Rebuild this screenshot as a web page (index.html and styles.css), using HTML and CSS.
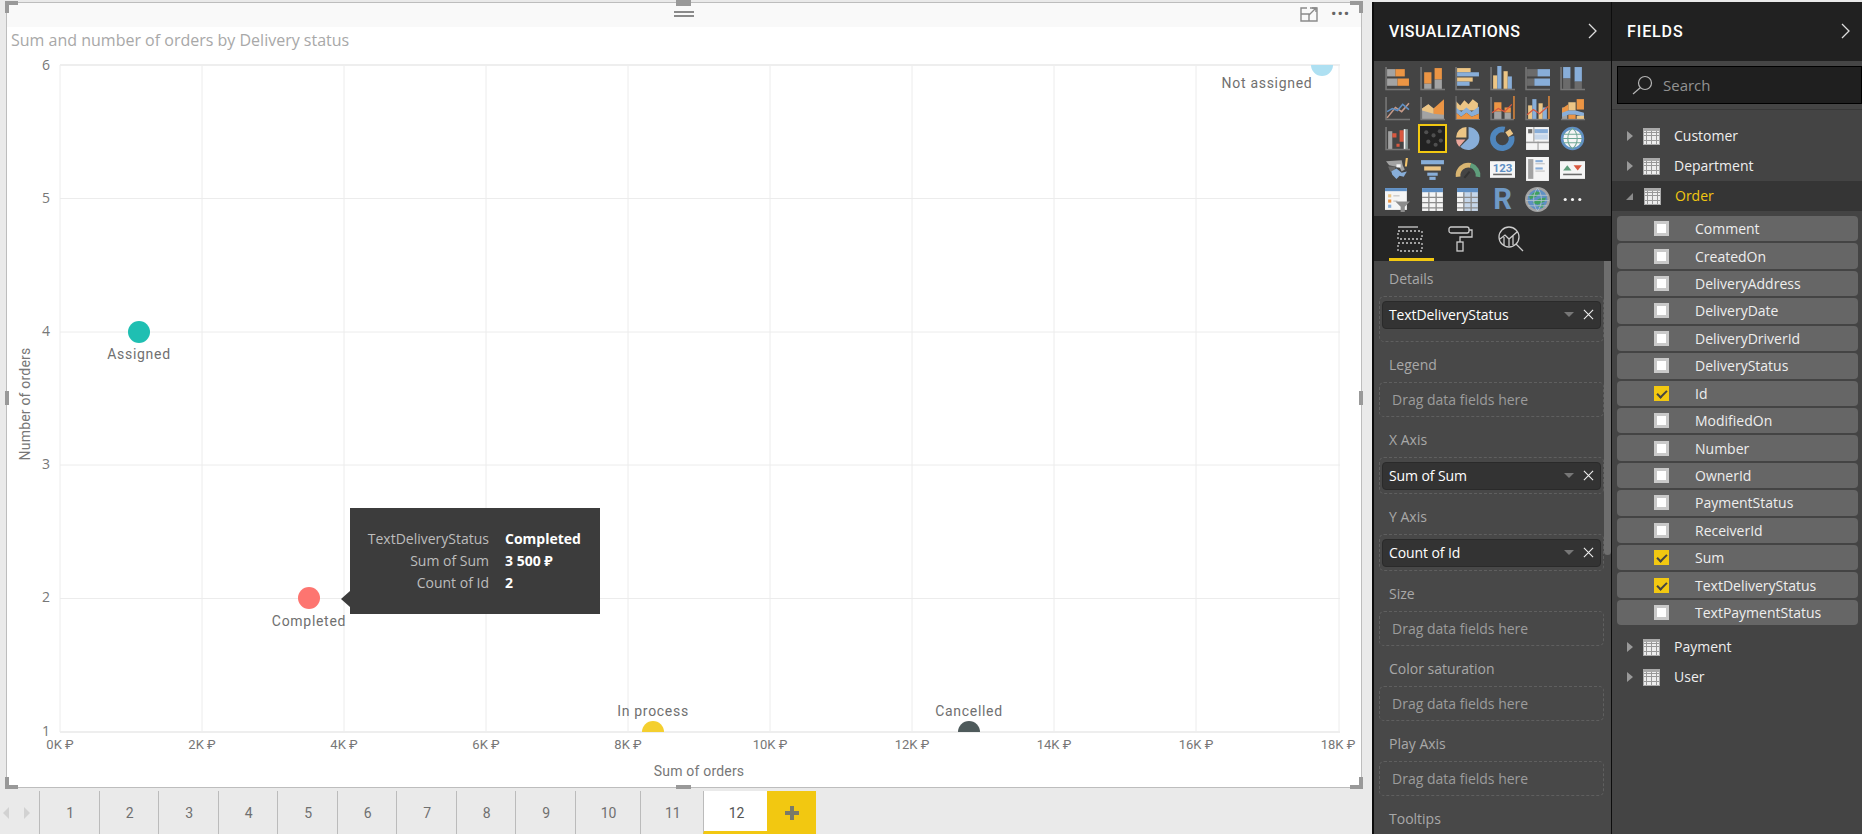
FILE: index.html
```html
<!DOCTYPE html>
<html lang="en">

<head>
    <meta charset="UTF-8">
    <title>Orders report</title>
    <link rel="stylesheet" href="styles.css">
</head>

<body>
    <!-- Report canvas and page tabs -->
    <div class="report">
        <div class="canvas">
            <div class="visual">
                <span class="grip corner tl"></span>
                <span class="grip corner tr"></span>
                <span class="grip corner bl"></span>
                <span class="grip corner br"></span>
                <span class="grip side-top"></span>
                <span class="grip side-left"></span>
                <span class="grip side-right"></span>
                <span class="grip side-bottom"></span>
                <span class="drag-lines"></span>

                <div class="visual-head">
                    <svg class="focus-icon" width="18" height="15" viewBox="0 0 18 15">
                        <path d="M10 1H17V14H1V7H9V14M1 7V1H7" class="icon-line" />
                        <path d="M9 8L16 1M12 1H16V5" class="icon-line" />
                    </svg>
                    <span class="more">&middot;&middot;&middot;</span>
                </div>
                <div class="visual-title">Sum and number of orders by Delivery status</div>

                <!-- viewBox uses page coordinates so the numbers can be read against the plot -->
                <svg class="chart" viewBox="7 55 1353 732">
                    <defs>
                        <clipPath id="plot-clip">
                            <rect x="60" y="65" width="1280" height="667" />
                        </clipPath>
                    </defs>
                    <g class="grid">
                        <path d="M60 65V732M202 65V732M344 65V732M486 65V732M628 65V732M770 65V732M912 65V732M1054 65V732M1196 65V732M1339 65V732" />
                        <path d="M60 198.500H1340M60 332H1340M60 465H1340M60 598.500H1340" />
                        <path class="grid-edge" d="M60 65H1340M60 732H1340" />
                    </g>
                    <g class="y-ticks">
                        <text x="50" y="70">6</text>
                        <text x="50" y="203">5</text>
                        <text x="50" y="336">4</text>
                        <text x="50" y="469">3</text>
                        <text x="50" y="602">2</text>
                        <text x="50" y="736">1</text>
                    </g>
                    <g class="x-ticks">
                        <text x="60" y="749">0K ₽</text>
                        <text x="202" y="749">2K ₽</text>
                        <text x="344" y="749">4K ₽</text>
                        <text x="486" y="749">6K ₽</text>
                        <text x="628" y="749">8K ₽</text>
                        <text x="770" y="749">10K ₽</text>
                        <text x="912" y="749">12K ₽</text>
                        <text x="1054" y="749">14K ₽</text>
                        <text x="1196" y="749">16K ₽</text>
                        <text x="1338" y="749">18K ₽</text>
                    </g>
                    <text class="axis-title" x="699" y="776">Sum of orders</text>
                    <text class="axis-title" transform="translate(30 404) rotate(-90)">Number of orders</text>

                    <g clip-path="url(#plot-clip)">
                        <circle class="pt-blue" cx="1322" cy="65" r="11" />
                        <circle class="pt-teal" cx="139" cy="332" r="11" />
                        <circle class="pt-red" cx="309" cy="598" r="11" />
                        <circle class="pt-yellow" cx="653" cy="732" r="11" />
                        <circle class="pt-slate" cx="969" cy="732" r="11" />
                    </g>
                    <g class="pt-labels">
                        <text x="1267" y="88">Not assigned</text>
                        <text x="139" y="359">Assigned</text>
                        <text x="309" y="626">Completed</text>
                        <text x="653" y="716">In process</text>
                        <text x="969" y="716">Cancelled</text>
                    </g>
                </svg>

                <div class="tooltip">
                    <span class="tip-key">TextDeliveryStatus</span><b>Completed</b>
                    <span class="tip-key">Sum of Sum</span><b>3 500 ₽</b>
                    <span class="tip-key">Count of Id</span><b>2</b>
                </div>
            </div>
        </div>

        <div class="tabs">
            <div class="tab-nav">
                <span class="nav-arrow left"></span>
                <span class="nav-arrow right"></span>
            </div>
            <div class="tab">1</div>
            <div class="tab">2</div>
            <div class="tab">3</div>
            <div class="tab">4</div>
            <div class="tab">5</div>
            <div class="tab">6</div>
            <div class="tab">7</div>
            <div class="tab">8</div>
            <div class="tab">9</div>
            <div class="tab wide">10</div>
            <div class="tab mid">11</div>
            <div class="tab active">12</div>
            <div class="tab-add">
                <svg width="14" height="14" viewBox="0 0 14 14"><path class="plus" d="M5 0H9V5H14V9H9V14H5V9H0V5H5Z" /></svg>
            </div>
        </div>
    </div>

    <!-- Visualizations pane -->
    <div class="pane viz">
        <div class="pane-head">
            <span>VISUALIZATIONS</span>
            <svg class="chevron" width="10" height="16" viewBox="0 0 10 16"><path d="M1 1L8 8L1 15" /></svg>
        </div>

        <div class="gallery">
            <!-- row 1 -->
            <svg viewBox="0 0 24 24"><rect class="gy" x="2" y="3" width="8" height="7" /><rect class="or" x="10" y="3" width="9" height="7" /><rect class="gy" x="2" y="12" width="10" height="7" /><rect class="or" x="12" y="12" width="11" height="7" /><path class="ax" d="M1 1V22.500H24" /></svg>
            <svg viewBox="0 0 24 24"><rect class="or" x="4" y="6" width="7" height="11" /><rect class="gy" x="4" y="17" width="7" height="5" /><rect class="or" x="14" y="2" width="7" height="11" /><rect class="gy" x="14" y="13" width="7" height="9" /><path class="ax" d="M1 1V22.500H24" /></svg>
            <svg viewBox="0 0 24 24"><rect class="tn" x="2" y="2" width="13" height="4" /><rect class="bl" x="2" y="6" width="21" height="4" /><rect class="tn" x="2" y="11" width="15" height="4" /><rect class="bl" x="2" y="15" width="12" height="4" /><path class="ax" d="M1 1V22.500H24" /></svg>
            <svg viewBox="0 0 24 24"><rect class="tn" x="3" y="9" width="4" height="13" /><rect class="bl" x="7" y="0" width="4" height="22" /><rect class="tn" x="13" y="5" width="4" height="17" /><rect class="bl" x="17" y="10" width="4" height="12" /><path class="ax" d="M1 1V22.500H24" /></svg>
            <svg viewBox="0 0 24 24"><rect class="dk" x="2" y="3" width="10" height="7" /><rect class="bl" x="12" y="3" width="12" height="7" /><rect class="dk" x="2" y="12" width="7" height="7" /><rect class="bl" x="9" y="12" width="15" height="7" /><path class="ax" d="M1 1V22.500H24" /></svg>
            <svg viewBox="0 0 24 24"><rect class="bl" x="3" y="1" width="7" height="11" /><rect class="dk" x="3" y="12" width="7" height="10" /><rect class="bl" x="14" y="1" width="7" height="14" /><rect class="dk" x="14" y="15" width="7" height="7" /><path class="ax" d="M1 1V22.500H24" /></svg>
            <!-- row 2 -->
            <svg viewBox="0 0 24 24"><path class="ax" d="M1 1V22.500H24" /><path class="ln-tan" d="M2 21L10 11L16 15L23 7" /><path class="ln-blue" d="M2 15L7 12L12 14L17 8L23 13" /></svg>
            <svg viewBox="0 0 24 24"><path class="gy" d="M2 12L8 8L13 12L23 6V22H2Z" /><path class="tn" d="M2 12L8 8L13 12L13 17L2 14Z" /><path class="or" d="M13 12L23 3V18L13 17Z" /><path class="ax" d="M1 1V22.500H24" /></svg>
            <svg viewBox="0 0 24 24"><path class="tn" d="M1 5L5 9L9 4L13 8L17 3L22 7V14H1Z" /><path class="bl" d="M1 11L6 15L11 11L16 15L23 10V17L16 20L11 16L6 20L1 16Z" /><path class="or" d="M1 16L6 20L11 16L16 20L23 17V22H1Z" /><path class="ax-thin" d="M1 0V22.500H24" /></svg>
            <svg viewBox="0 0 24 24"><path class="ax" d="M1 1V22.500H23" /><path class="ax-or" d="M23 0V22" /><rect class="or" x="4" y="6" width="7" height="9" /><rect class="gy" x="4" y="15" width="7" height="7" /><rect class="or" x="14" y="11" width="6" height="5" /><rect class="gy" x="14" y="16" width="6" height="6" /><path class="ln-red" d="M2 16L8 12L14 15L21 8" /></svg>
            <svg viewBox="0 0 24 24"><path class="ax" d="M1 1V22.500H23" /><path class="ax-or" d="M23 0V22" /><rect class="tn" x="3" y="9" width="4" height="13" /><rect class="bl" x="7" y="3" width="4" height="19" /><rect class="tn" x="13" y="7" width="4" height="15" /><rect class="bl" x="17" y="11" width="4" height="11" /><path class="ln-red" d="M2 18L8 13L14 17L22 10" /></svg>
            <svg viewBox="0 0 24 24"><path class="ax" d="M1 22.500H24" /><rect class="gy" x="2" y="11" width="5" height="11" /><rect class="tn" x="8" y="6" width="7" height="8" /><rect class="or" x="16" y="3" width="7" height="10" /><path class="or" d="M2 12L8 8V14L2 17Z" /><path class="bl" d="M2 16L8 14H15L23 16V20L15 18H8L2 20Z" /><rect class="or" x="8" y="18" width="7" height="4" /><rect class="tn" x="16" y="19" width="7" height="3" /></svg>
            <!-- row 3 -->
            <svg viewBox="0 0 24 24"><path class="ax" d="M1 1V22.500H24" /><rect class="gy" x="3" y="5" width="4" height="17" /><path class="red" d="M7 7H11V17H14V4H18V15H14V20H11V11H7Z" /><rect class="dk-bar" x="19" y="3" width="3" height="19" /><rect class="wh" x="18" y="3" width="1.500" height="19" /></svg>
            <svg class="sel" viewBox="0 0 24 24"><circle class="dot" cx="6" cy="6" r="2" /><circle class="dot" cx="13" cy="9" r="2" /><circle class="dot" cx="19" cy="5" r="2" /><circle class="dot" cx="8" cy="15" r="2" /><circle class="dot" cx="15" cy="18" r="2" /><circle class="dot" cx="20" cy="14" r="2" /></svg>
            <svg viewBox="0 0 24 24"><path class="bl" d="M13 1A11 11 0 1 1 5 20L13 12Z" /><path class="tn" d="M11 1V11H1A10 10 0 0 1 11 1Z" /><path class="pink" d="M1 13H10L4 20A10 10 0 0 1 1 13Z" /></svg>
            <svg viewBox="0 0 24 24"><path class="ring-blue" d="M14 3.500A9 9 0 1 0 20.500 10" /><path class="ring-tan" d="M17 4.500L20 9" /></svg>
            <svg viewBox="0 0 24 24"><rect class="wh" x="1" y="1" width="22" height="22" /><rect class="bl" x="9" y="3" width="13" height="4" /><rect class="bl-l" x="9" y="8" width="13" height="5" /><rect class="dk" x="3" y="3" width="4" height="4" /><rect class="line-fill" x="1" y="15" width="22" height="1.500" /><rect class="line-fill" x="8" y="1" width="1" height="14" /><rect class="line-fill" x="12" y="15" width="1" height="8" /></svg>
            <svg viewBox="0 0 24 24"><circle class="wh" cx="12" cy="12" r="10" /><circle class="rim-blue" cx="12" cy="12" r="10" /><path class="globe-line" d="M3 8H21M2.500 12H21.500M3 16H21M12 2C6 7 6 17 12 22M12 2C18 7 18 17 12 22" /></svg>
            <!-- row 4 -->
            <svg viewBox="0 0 24 24"><path class="gy" d="M1 4L16 3L17 8L19 12L16 14L14 10L4 8Z" /><path class="dk" d="M3 9L10 9L10 15L5 14Z" /><path class="bl" d="M6 14L11 11L16 15L21 14L18 19L14 18L11 21L7 17Z" /><path class="wh" d="M11 7L15 7L15 10L11 10Z" /><path class="or-y" d="M20 1H22L21 9H19Z" /></svg>
            <svg viewBox="0 0 24 24"><rect class="bl" x="1" y="3" width="22" height="4" /><rect class="tn" x="4" y="9" width="16" height="4" /><rect class="bl" x="7" y="15" width="10" height="3" /><rect class="bl" x="9" y="19" width="6" height="3" /></svg>
            <svg viewBox="0 0 24 24"><path class="arc-tan" d="M3 19A10 10 0 0 1 15 8" /><path class="arc-green" d="M15 8A10 10 0 0 1 22 19" /><path class="needle" d="M9 20L14 14" /></svg>
            <svg viewBox="0 0 24 24"><rect class="wh" x="0" y="4" width="24" height="16" /><text class="card-num" x="12" y="14">123</text><rect class="dk" x="3" y="16" width="18" height="1.500" /></svg>
            <svg viewBox="0 0 24 24"><rect class="wh" x="1" y="0" width="22" height="23" /><rect class="gy" x="3" y="2" width="5" height="19" /><rect class="bl" x="10" y="3" width="7" height="2" /><rect class="gy-l" x="10" y="6" width="9" height="1" /><rect class="bl" x="10" y="10" width="7" height="2" /><rect class="gy-l" x="10" y="13" width="9" height="1" /></svg>
            <svg viewBox="0 0 24 24"><rect class="wh" x="0" y="4" width="24" height="17" /><path class="green" d="M3 13L7 8L11 13Z" /><path class="red" d="M13 8H21L17 13Z" /><rect class="dk" x="3" y="16" width="18" height="1.500" /></svg>
            <!-- row 5 -->
            <svg viewBox="0 0 24 24"><rect class="wh" x="0" y="1" width="21" height="21" /><rect class="bl-d" x="0" y="1" width="21" height="3" /><rect class="tn" x="3" y="7" width="3" height="3" /><rect class="or" x="3" y="12" width="3" height="3" /><rect class="bl" x="3" y="17" width="3" height="3" /><rect class="gy-l" x="8" y="8" width="6" height="1" /><rect class="gy-l" x="8" y="13" width="4" height="1" /><path class="funnel" d="M10 14H24L19 19V24H15V19Z" /></svg>
            <svg viewBox="0 0 24 24"><rect class="wh" x="2" y="1" width="20" height="22" /><rect class="bl-d" x="2" y="1" width="20" height="4" /><path class="cell-line" d="M2 10H22M2 15H22M2 20H22M8.500 5V23M15.500 5V23" /></svg>
            <svg viewBox="0 0 24 24"><rect class="bl-l" x="2" y="1" width="20" height="22" /><rect class="bl-d" x="2" y="1" width="20" height="4" /><rect class="wh" x="2" y="5" width="6" height="18" /><path class="cell-line" d="M2 10H22M2 15H22M2 20H22M8.500 5V23M15.500 5V23" /></svg>
            <svg viewBox="0 0 24 24"><text class="r-mark" x="12" y="21">R</text></svg>
            <svg viewBox="0 0 24 24"><circle class="gy" cx="12" cy="12" r="12" /><circle class="bl-d" cx="12" cy="12" r="9.500" /><path class="earth" d="M4 9L10 4L15 5L11 9L5 12ZM7 15L14 11L20 10L19 14L12 17ZM12 19L18 16L17 20Z" /><path class="grid-globe" d="M2 8H22M1 13H23M3 18H21M12 1C7 7 7 17 12 23M12 1C17 7 17 17 12 23" /></svg>
            <svg viewBox="0 0 24 24"><circle class="wh" cx="5" cy="12" r="1.500" /><circle class="wh" cx="12" cy="12" r="1.500" /><circle class="wh" cx="19" cy="12" r="1.500" /></svg>
        </div>

        <div class="pane-tabs">
            <div class="pane-tab on">
                <svg width="26" height="26" viewBox="0 0 26 26">
                    <path class="icon-pale" d="M1 1H21" />
                    <rect class="icon-dash" x="1" y="5" width="24" height="8" />
                    <rect class="icon-dash" x="1" y="17" width="24" height="8" />
                </svg>
            </div>
            <div class="pane-tab">
                <svg width="26" height="26" viewBox="0 0 26 26">
                    <rect class="icon-pale" x="1" y="1" width="20" height="6" rx="2" />
                    <path class="icon-pale" d="M21 4H24V11H12V16" />
                    <rect class="icon-pale" x="9" y="16" width="6" height="9" />
                </svg>
            </div>
            <div class="pane-tab">
                <svg width="26" height="26" viewBox="0 0 26 26">
                    <circle class="icon-pale" cx="11" cy="11" r="10" />
                    <path class="icon-pale" d="M18 18L25 25" />
                    <path class="icon-pale" d="M2 13L7 9L11 13L19 6M6 11V19M11 13V20M15 10V19" />
                </svg>
            </div>
        </div>

        <div class="wells">
            <div class="scrollbar"></div>

            <div class="well-label">Details</div>
            <div class="well filled details">
                <div class="pill"><span>TextDeliveryStatus</span><i class="caret"></i><svg class="x-mark" viewBox="0 0 12 12"><path d="M1 1L11 11M11 1L1 11" /></svg></div>
            </div>

            <div class="well-label">Legend</div>
            <div class="well">Drag data fields here</div>

            <div class="well-label">X Axis</div>
            <div class="well filled">
                <div class="pill"><span>Sum of Sum</span><i class="caret"></i><svg class="x-mark" viewBox="0 0 12 12"><path d="M1 1L11 11M11 1L1 11" /></svg></div>
            </div>

            <div class="well-label">Y Axis</div>
            <div class="well filled">
                <div class="pill"><span>Count of Id</span><i class="caret"></i><svg class="x-mark" viewBox="0 0 12 12"><path d="M1 1L11 11M11 1L1 11" /></svg></div>
            </div>

            <div class="well-label">Size</div>
            <div class="well">Drag data fields here</div>

            <div class="well-label">Color saturation</div>
            <div class="well">Drag data fields here</div>

            <div class="well-label">Play Axis</div>
            <div class="well">Drag data fields here</div>

            <div class="well-label">Tooltips</div>
        </div>
    </div>

    <!-- Fields pane -->
    <div class="pane fields">
        <div class="pane-head">
            <span>FIELDS</span>
            <svg class="chevron" width="10" height="16" viewBox="0 0 10 16"><path d="M1 1L8 8L1 15" /></svg>
        </div>

        <div class="search-wrap">
            <div class="search">
                <svg width="21" height="20" viewBox="0 0 21 20">
                    <circle class="search-line" cx="13" cy="8" r="6.500" />
                    <path class="search-line" d="M8.500 12.500L1 19" />
                </svg>
                <span>Search</span>
            </div>
        </div>

        <div class="field-list">
            <div class="group"><i class="tri"></i><span class="tbl"></span>Customer</div>
            <div class="group"><i class="tri"></i><span class="tbl"></span>Department</div>
            <div class="group open"><i class="tri"></i><span class="tbl"></span>Order</div>

            <div class="rows">
                <div class="row"><i class="check"></i>Comment</div>
                <div class="row"><i class="check"></i>CreatedOn</div>
                <div class="row"><i class="check"></i>DeliveryAddress</div>
                <div class="row"><i class="check"></i>DeliveryDate</div>
                <div class="row"><i class="check"></i>DeliveryDriverId</div>
                <div class="row"><i class="check"></i>DeliveryStatus</div>
                <div class="row"><i class="check on"></i>Id</div>
                <div class="row"><i class="check"></i>ModifiedOn</div>
                <div class="row"><i class="check"></i>Number</div>
                <div class="row"><i class="check"></i>OwnerId</div>
                <div class="row"><i class="check"></i>PaymentStatus</div>
                <div class="row"><i class="check"></i>ReceiverId</div>
                <div class="row"><i class="check on"></i>Sum</div>
                <div class="row"><i class="check on"></i>TextDeliveryStatus</div>
                <div class="row"><i class="check"></i>TextPaymentStatus</div>
            </div>

            <div class="group"><i class="tri"></i><span class="tbl"></span>Payment</div>
            <div class="group"><i class="tri"></i><span class="tbl"></span>User</div>
        </div>
    </div>
</body>

</html>
```

FILE: styles.css
```css
/* Page */
html {
    height: 834px;
    overflow: hidden;
}

body {
    margin: 0;
    height: 834px;
    overflow: hidden;
    display: flex;
    background: #eaeaea;
    font-family: 'Open Sans', 'Noto Sans', sans-serif;
    font-size: 14px;
    color: #eee;
}

/* Report canvas */
.report {
    width: 1372px;
    flex: none;
    display: flex;
    flex-direction: column;
}

.canvas {
    height: 791px;
    padding: 2px 10px 0 6px;
    box-sizing: border-box;
}

.visual {
    position: relative;
    height: 786px;
    box-sizing: border-box;
    border: 1px solid #bdbdbd;
    background: #fff;
    display: flex;
    flex-direction: column;
}

.visual-head {
    height: 24px;
    flex: none;
    background: #f9f9f9;
    display: flex;
    justify-content: flex-end;
    align-items: flex-start;
    padding: 4px 8px 0 0;
    box-sizing: border-box;
}

.focus-icon {
    margin-right: 13px;
}

.icon-line {
    fill: none;
    stroke: #8a8a8a;
    stroke-width: 1.4;
}

.more {
    width: 22px;
    font: bold 19px/12px 'Open Sans', sans-serif;
    letter-spacing: 1px;
    color: #666;
}

.visual-title {
    height: 28px;
    flex: none;
    padding-left: 4px;
    font-size: 16px;
    line-height: 27px;
    color: #a8a8a8;
}

.chart {
    width: 1353px;
    height: 732px;
    display: block;
    flex: none;
}

.grid path {
    fill: none;
    stroke: #ececec;
    stroke-width: 1;
}

.grid .grid-edge {
    stroke: #eee;
    stroke-width: 2;
}

.y-ticks text {
    text-anchor: end;
    font-size: 14px;
    fill: #777;
}

.x-ticks text {
    text-anchor: middle;
    font: 13px 'Roboto', sans-serif;
    fill: #777;
}

.axis-title {
    text-anchor: middle;
    font: 14px 'Roboto', sans-serif;
    letter-spacing: 0.2px;
    fill: #777;
}

.pt-labels text {
    text-anchor: middle;
    font: 14px 'Roboto', sans-serif;
    letter-spacing: 0.7px;
    fill: #707070;
}

.pt-blue { fill: #aee0f2; }
.pt-teal { fill: #1fbfb2; }
.pt-red { fill: #fd7570; }
.pt-yellow { fill: #f4cf2f; }
.pt-slate { fill: #4e5a5b; }

/* Selection handles round the visual */
.grip {
    position: absolute;
    background: #999;
}

.corner {
    width: 13px;
    height: 12px;
    background: none;
    border: 0 solid #999;
    box-sizing: border-box;
}

.tl { left: -2px; top: -2px; border-width: 4px 0 0 4px; }
.tr { right: -2px; top: -2px; border-width: 4px 4px 0 0; }
.bl { left: -2px; bottom: -2px; border-width: 0 0 4px 4px; }
.br { right: -2px; bottom: -2px; border-width: 0 4px 4px 0; }

.side-top { left: 669px; top: -3px; width: 15px; height: 6px; }
.side-left { left: -2px; top: 388px; width: 4px; height: 14px; }
.side-right { right: -2px; top: 388px; width: 4px; height: 14px; }
.side-bottom { left: 669px; bottom: -2px; width: 15px; height: 4px; }

.drag-lines {
    position: absolute;
    left: 667px;
    top: 8px;
    width: 20px;
    height: 6px;
    border-top: 2px solid #8a8a8a;
    border-bottom: 2px solid #8a8a8a;
    box-sizing: border-box;
}

/* Tooltip over the chart */
.tooltip {
    position: absolute;
    left: 343px;
    top: 505px;
    width: 250px;
    height: 106px;
    box-sizing: border-box;
    padding: 20px 0 0 16px;
    background: #3c3c3c;
    display: grid;
    grid-template-columns: 123px auto;
    grid-auto-rows: 22px;
    column-gap: 16px;
    align-content: start;
    line-height: 22px;
    font-size: 14px;
    color: #fff;
}

.tooltip::before {
    content: "";
    position: absolute;
    left: -9px;
    top: 83px;
    border: 8px solid transparent;
    border-left: 0;
    border-right: 9px solid #3c3c3c;
}

.tip-key {
    text-align: right;
    color: #bdbdbd;
}

/* Page tabs */
.tabs {
    height: 43px;
    display: flex;
    background: #eaeaea;
}

.tab-nav {
    width: 39px;
    flex: none;
    display: flex;
    align-items: center;
    justify-content: space-between;
    padding: 0 9px 0 3px;
    box-sizing: border-box;
}

.nav-arrow {
    width: 0;
    height: 0;
    border: 6px solid transparent;
}

.nav-arrow.left {
    border-left: 0;
    border-right: 6px solid #d2d2d2;
}

.nav-arrow.right {
    border-right: 0;
    border-left: 6px solid #d2d2d2;
}

.tab {
    width: 59.500px;
    flex: none;
    box-sizing: border-box;
    padding-left: 2px;
    border-left: 1px solid #bbb;
    text-align: center;
    font: 14px/45px 'Roboto', sans-serif;
    color: #707070;
}

.tab.wide {
    width: 65px;
}

.tab.mid {
    width: 63.500px;
}

.tab.active {
    width: 64px;
    height: 43px;
    background: #fff;
    color: #555;
    border-bottom: 3px solid #f2c811;
}

.tab-add {
    width: 49px;
    flex: none;
    background: #f2c811;
    display: flex;
    align-items: center;
    justify-content: center;
}

.plus {
    fill: #7a7a68;
}

/* Side panes */
.pane {
    flex: none;
    box-sizing: border-box;
    border-left: 2px solid #0d0d0d;
    margin-top: 2px;
    display: flex;
    flex-direction: column;
    height: 832px;
    overflow: hidden;
}

.viz {
    width: 239px;
    background: #484848;
}

.fields {
    width: 251px;
    border-left-width: 1px;
    background: #444;
}

.pane-head {
    height: 59px;
    flex: none;
    background: #212121;
    display: flex;
    justify-content: space-between;
    align-items: center;
    padding: 3px 13px 4px 15px;
    box-sizing: border-box;
    font: 500 16px 'Roboto', sans-serif;
    letter-spacing: 0.5px;
    color: #fff;
}

.fields .pane-head {
    padding-left: 15px;
    padding-right: 11px;
    letter-spacing: 0.9px;
}

.chevron path {
    fill: none;
    stroke: #ddd;
    stroke-width: 1.3;
}

/* Visual type gallery */
.gallery {
    height: 155px;
    flex: none;
    box-sizing: border-box;
    padding: 2px 0 0 6px;
    background: #444;
    display: grid;
    grid-template-columns: repeat(6, 35px);
    grid-auto-rows: 30.400px;
    justify-items: center;
    align-items: center;
}

.gallery svg {
    width: 25px;
    height: 25px;
    overflow: visible;
    display: block;
}

.gallery .sel {
    background: #222;
    outline: 2px solid #f2c811;
}

.or { fill: #ec9544; }
.bl { fill: #88aed9; }
.bl-l { fill: #c5d6ea; }
.bl-d { fill: #5f8fc4; }
.tn { fill: #ecc585; }
.gy { fill: #a3a3a3; }
.gy-l { fill: #bdbdbd; }
.dk { fill: #6b6b6b; }
.wh { fill: #f5f5f5; }
.red { fill: #d9583f; }
.pink { fill: #eba79c; }
.green { fill: #5f9e7c; }
.or-y { fill: #f2c36b; }
.dot { fill: #4f4f4f; }
.dk-bar { fill: #8a9a98; }
.line-fill { fill: #9b9b9b; }
.funnel { fill: #8c8c8c; }
.earth { fill: #3fa060; }

.ax { fill: none; stroke: #777; stroke-width: 1.5; }
.ax-thin { fill: none; stroke: #777; stroke-width: 1; }
.ax-or { fill: none; stroke: #d9853b; stroke-width: 1.5; }
.ln-tan { fill: none; stroke: #c89b8a; stroke-width: 1.5; }
.ln-blue { fill: none; stroke: #5f8fc4; stroke-width: 1.5; }
.ln-red { fill: none; stroke: #d9583f; stroke-width: 1.2; }
.ring-blue { fill: none; stroke: #4f86bd; stroke-width: 5.500; }
.ring-tan { fill: none; stroke: #ecc585; stroke-width: 5.500; }
.rim-blue { fill: none; stroke: #5f8fc4; stroke-width: 2.500; }
.globe-line { fill: none; stroke: #6fa695; stroke-width: 1; }
.grid-globe { fill: none; stroke: #b5c4cc; stroke-width: .8; }
.arc-tan { fill: none; stroke: #d9b571; stroke-width: 4.500; }
.arc-green { fill: none; stroke: #5f9e7c; stroke-width: 4.500; }
.needle { fill: none; stroke: #333; stroke-width: 2; }
.cell-line { fill: none; stroke: #8d8d8d; stroke-width: 1.300; }

.card-num {
    text-anchor: middle;
    font: bold 11px 'Roboto', sans-serif;
    fill: #5f8fc4;
}

.r-mark {
    text-anchor: middle;
    font: bold 28px 'Roboto', sans-serif;
    fill: #6f99c5;
}

/* Fields / format / analytics switch */
.pane-tabs {
    height: 45px;
    flex: none;
    background: #252525;
    display: flex;
    padding-left: 15px;
    box-sizing: border-box;
}

.pane-tab {
    width: 50px;
    padding: 10px 0 0 9px;
    box-sizing: border-box;
}

.pane-tab.on {
    width: 45px;
    margin-right: 5px;
    padding-left: 8px;
    border-bottom: 3px solid #f2c811;
}

.icon-pale {
    fill: none;
    stroke: #ccc;
    stroke-width: 1.300;
}

.icon-dash {
    fill: none;
    stroke: #ccc;
    stroke-width: 1.300;
    stroke-dasharray: 2 2;
}

/* Field wells */
.wells {
    position: relative;
    flex: 1;
    padding: 8px 7px 0 5px;
    box-sizing: border-box;
}

.scrollbar {
    position: absolute;
    right: 0;
    top: 0;
    width: 7px;
    height: 294px;
    border-radius: 0 0 4px 4px;
    background: #6e6e6e;
}

.well-label {
    height: 20px;
    padding-left: 10px;
    margin-bottom: 7px;
    line-height: 20px;
    color: #a8a8a8;
}

.well {
    height: 35px;
    margin-bottom: 13px;
    padding-left: 12px;
    box-sizing: border-box;
    border: 1px dashed #5f5f5f;
    border-radius: 5px;
    line-height: 33px;
    color: #9c9c9c;
}

.well.filled {
    height: 37px;
    padding: 3.500px 2px 0;
}

.well.details {
    height: 46px;
}

.pill {
    height: 28px;
    padding: 0 6px;
    display: flex;
    align-items: center;
    border: 1px solid #2a2a2a;
    border-radius: 4px;
    box-sizing: border-box;
    background: #333;
    color: #fff;
    line-height: 26px;
    letter-spacing: -0.1px;
}

.pill span {
    flex: 1;
}

.caret {
    width: 0;
    height: 0;
    margin-right: 9px;
    border: 5px solid transparent;
    border-top: 5px solid #777;
    border-bottom: 0;
}

.x-mark {
    width: 11px;
    height: 11px;
}

.x-mark path {
    fill: none;
    stroke: #eee;
    stroke-width: 1.200;
}

/* Search box */
.search-wrap {
    height: 49px;
    flex: none;
    padding: 5px 0 0 5px;
    box-sizing: border-box;
    background: #454545;
    border-bottom: 1px solid #383838;
}

.search {
    height: 38px;
    box-sizing: border-box;
    border: 1px solid #000;
    background: #1f1f1f;
    display: flex;
    align-items: center;
    padding-left: 14px;
    font-size: 15px;
    color: #929292;
}

.search svg {
    margin-right: 10px;
}

.search-line {
    fill: none;
    stroke: #b5b5b5;
    stroke-width: 1.200;
}

/* Field list */
.field-list {
    padding-top: 11px;
}

.group {
    height: 30px;
    display: flex;
    align-items: center;
    padding-left: 15px;
    line-height: 30px;
    color: #eee;
}

.group.open {
    background: #353535;
    color: #f2c811;
    margin-bottom: 5px;
}

.tri {
    width: 0;
    height: 0;
    margin-right: 10px;
    border: 5px solid transparent;
    border-left: 6px solid #999;
    border-right: 0;
}

.group.open .tri {
    margin-left: -1px;
    margin-right: 11px;
    border: 0 solid transparent;
    border-width: 0 0 7px 7px;
    border-bottom-color: #8a8a8a;
}

.tbl {
    width: 17px;
    height: 17px;
    margin-right: 14px;
    flex: none;
    background:
        repeating-linear-gradient(90deg, #999 0 1px, transparent 1px 5px) 2px 0,
        repeating-linear-gradient(0deg, #999 0 1px, transparent 1px 5px) 0 2px,
        #eee;
    border: 1px solid #aaa;
    border-top-width: 3px;
    box-sizing: border-box;
}

.rows {
    display: flex;
    flex-direction: column;
    gap: 2px;
    margin-bottom: 7px;
}

.row {
    height: 25.430px;
    margin: 0 4px 0 5px;
    display: flex;
    align-items: center;
    border-radius: 4px;
    background: #666;
    color: #eee;
}

.check {
    position: relative;
    width: 15px;
    height: 15px;
    margin: 0 26px 0 37px;
    flex: none;
    box-sizing: border-box;
    border: 3px solid #c9c9c9;
    background: #fff;
}

.check.on {
    border: 0;
    background: #f2c811;
}

.check.on::after {
    content: "";
    position: absolute;
    left: 5px;
    top: 2px;
    width: 4px;
    height: 8px;
    border: solid #444;
    border-width: 0 2px 2px 0;
    transform: rotate(45deg);
}
```
